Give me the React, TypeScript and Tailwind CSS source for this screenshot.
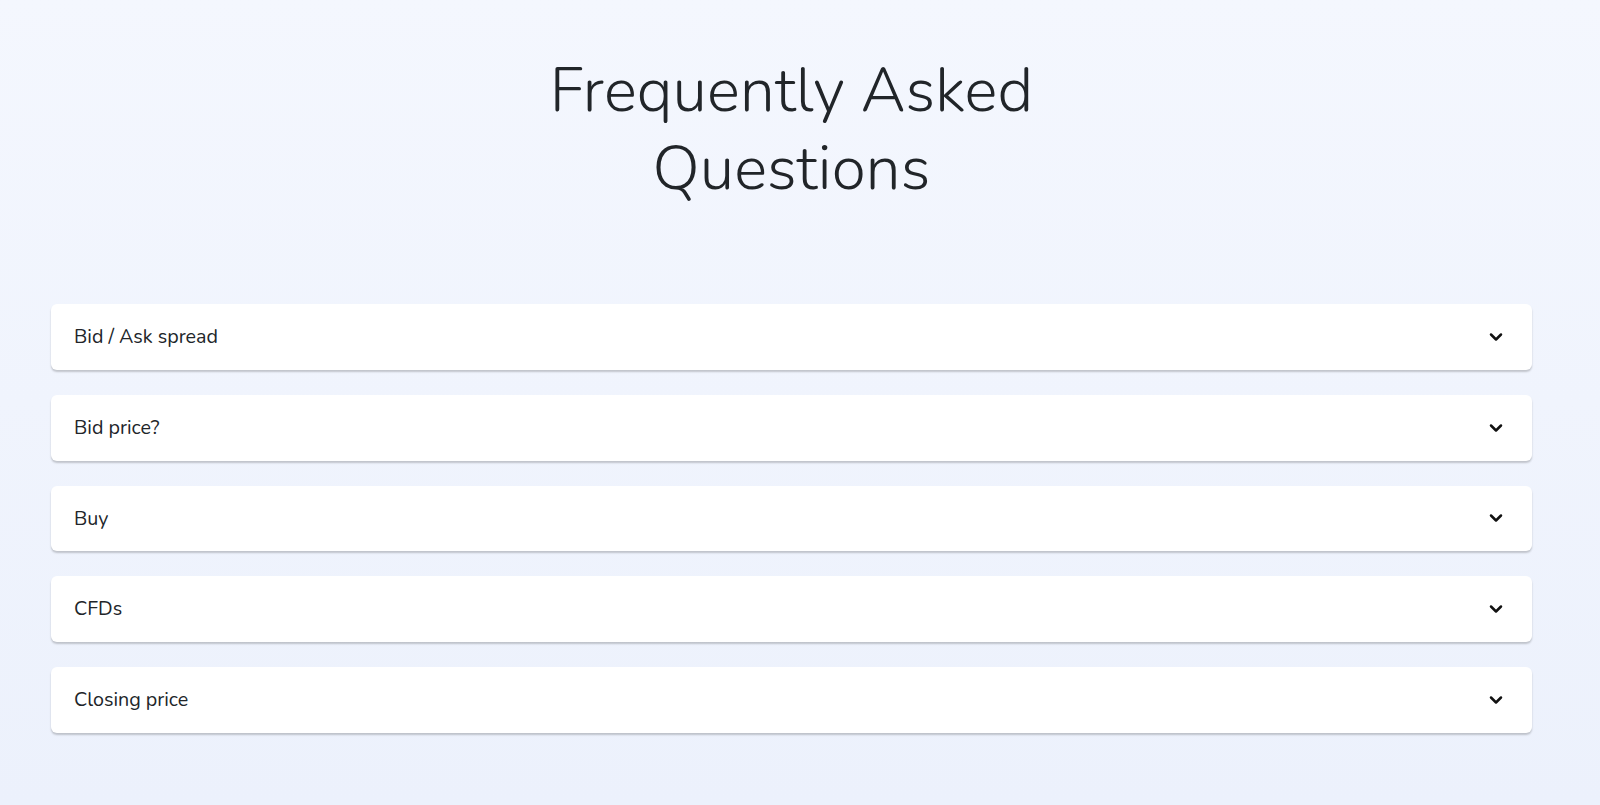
import React from "react";

const items = ["Bid / Ask spread", "Bid price?", "Buy", "CFDs", "Closing price"];

function Chevron() {
  return (
    <svg width="24" height="24" viewBox="0 0 24 24" fill="none" stroke="#111" strokeWidth="2.5" strokeLinecap="round" strokeLinejoin="round">
      <path d="M7 9.5l5 5 5-5" />
    </svg>
  );
}

export default function App() {
  return (
    <div
      className="min-h-[805px] w-full bg-gradient-to-b from-[#f4f7fe] to-[#ecf1fc] pl-[51px] pr-[68px] pt-[52px] pb-[72px] text-[#212529]"
      style={{ fontFamily: '"Nunito", "Lato", "Open Sans", sans-serif' }}
    >
      <h1 className="mx-auto max-w-[580px] text-center text-[62px] font-light leading-[78px] tracking-[0.2px]">
        Frequently Asked Questions
      </h1>
      <div className="mt-[96px] flex flex-col gap-[25px]">
        {items.map((t) => (
          <div
            key={t}
            className="flex h-[65.75px] items-center justify-between rounded-[6px] bg-white pl-[23px] pr-[24px] shadow-[0_2px_2px_rgba(0,0,0,0.2)]"
          >
            <span className="text-[19.7px]">{t}</span>
            <Chevron />
          </div>
        ))}
      </div>
    </div>
  );
}
